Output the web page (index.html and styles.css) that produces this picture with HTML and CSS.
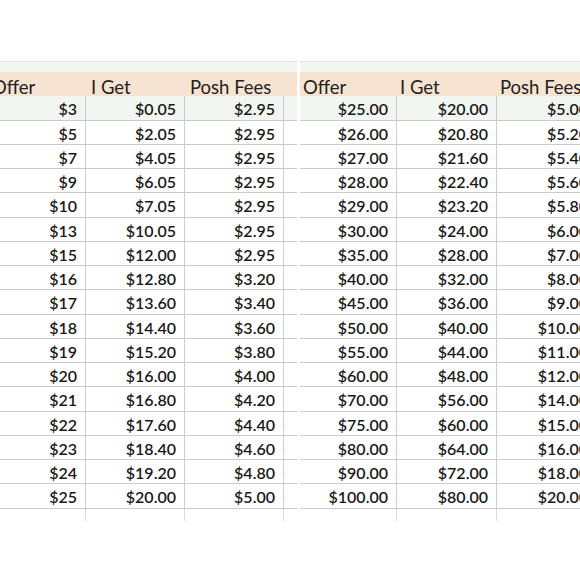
FILE: index.html
```html
<!DOCTYPE html>
<html>
<head>
<meta charset="utf-8">
<link rel="stylesheet" href="styles.css">
</head>
<body>
<div class="sheets">
  <div class="sheet sheet-left">
    <div class="strip"></div>
    <div class="grid">
      <div class="h">Offer</div><div class="h">I Get</div><div class="h">Posh Fees</div><div class="h"></div>
      <div class="c first">$3</div><div class="c first">$0.05</div><div class="c first">$2.95</div><div class="c first e"></div>
      <div class="c">$5</div><div class="c">$2.05</div><div class="c">$2.95</div><div class="c e"></div>
      <div class="c">$7</div><div class="c">$4.05</div><div class="c">$2.95</div><div class="c e"></div>
      <div class="c">$9</div><div class="c">$6.05</div><div class="c">$2.95</div><div class="c e"></div>
      <div class="c">$10</div><div class="c">$7.05</div><div class="c">$2.95</div><div class="c e"></div>
      <div class="c">$13</div><div class="c">$10.05</div><div class="c">$2.95</div><div class="c e"></div>
      <div class="c">$15</div><div class="c">$12.00</div><div class="c">$2.95</div><div class="c e"></div>
      <div class="c">$16</div><div class="c">$12.80</div><div class="c">$3.20</div><div class="c e"></div>
      <div class="c">$17</div><div class="c">$13.60</div><div class="c">$3.40</div><div class="c e"></div>
      <div class="c">$18</div><div class="c">$14.40</div><div class="c">$3.60</div><div class="c e"></div>
      <div class="c">$19</div><div class="c">$15.20</div><div class="c">$3.80</div><div class="c e"></div>
      <div class="c">$20</div><div class="c">$16.00</div><div class="c">$4.00</div><div class="c e"></div>
      <div class="c">$21</div><div class="c">$16.80</div><div class="c">$4.20</div><div class="c e"></div>
      <div class="c">$22</div><div class="c">$17.60</div><div class="c">$4.40</div><div class="c e"></div>
      <div class="c">$23</div><div class="c">$18.40</div><div class="c">$4.60</div><div class="c e"></div>
      <div class="c">$24</div><div class="c">$19.20</div><div class="c">$4.80</div><div class="c e"></div>
      <div class="c">$25</div><div class="c">$20.00</div><div class="c">$5.00</div><div class="c e"></div>
      <div class="t"></div><div class="t"></div><div class="t"></div><div class="t e"></div>
    </div>
  </div>
  <div class="sheet sheet-right">
    <div class="strip"></div>
    <div class="grid">
      <div class="h">Offer</div><div class="h">I Get</div><div class="h">Posh Fees</div><div class="h"></div>
      <div class="c first">$25.00</div><div class="c first">$20.00</div><div class="c first">$5.00</div><div class="c first"></div>
      <div class="c">$26.00</div><div class="c">$20.80</div><div class="c">$5.20</div><div class="c"></div>
      <div class="c">$27.00</div><div class="c">$21.60</div><div class="c">$5.40</div><div class="c"></div>
      <div class="c">$28.00</div><div class="c">$22.40</div><div class="c">$5.60</div><div class="c"></div>
      <div class="c">$29.00</div><div class="c">$23.20</div><div class="c">$5.80</div><div class="c"></div>
      <div class="c">$30.00</div><div class="c">$24.00</div><div class="c">$6.00</div><div class="c"></div>
      <div class="c">$35.00</div><div class="c">$28.00</div><div class="c">$7.00</div><div class="c"></div>
      <div class="c">$40.00</div><div class="c">$32.00</div><div class="c">$8.00</div><div class="c"></div>
      <div class="c">$45.00</div><div class="c">$36.00</div><div class="c">$9.00</div><div class="c"></div>
      <div class="c">$50.00</div><div class="c">$40.00</div><div class="c">$10.00</div><div class="c"></div>
      <div class="c">$55.00</div><div class="c">$44.00</div><div class="c">$11.00</div><div class="c"></div>
      <div class="c">$60.00</div><div class="c">$48.00</div><div class="c">$12.00</div><div class="c"></div>
      <div class="c">$70.00</div><div class="c">$56.00</div><div class="c">$14.00</div><div class="c"></div>
      <div class="c">$75.00</div><div class="c">$60.00</div><div class="c">$15.00</div><div class="c"></div>
      <div class="c">$80.00</div><div class="c">$64.00</div><div class="c">$16.00</div><div class="c"></div>
      <div class="c">$90.00</div><div class="c">$72.00</div><div class="c">$18.00</div><div class="c"></div>
      <div class="c">$100.00</div><div class="c">$80.00</div><div class="c">$20.00</div><div class="c"></div>
      <div class="t"></div><div class="t"></div><div class="t"></div><div class="t"></div>
    </div>
  </div>
</div>
</body>
</html>
```

FILE: styles.css
```css
html, body {
  margin: 0;
  padding: 0;
  background: #ffffff;
  width: 580px;
  height: 580px;
  overflow: hidden;
}

.sheets {
  display: flex;
  gap: 3px;
  padding-top: 61px;
  margin-left: -13px;
  font-family: Lato, "Liberation Sans", sans-serif;
  font-size: 16px;
  color: #1a1a1a;
}

.sheet {
  border-top: 1px solid #e2e2e2;
  flex: none;
}

.sheet-left { width: 310px; }
.sheet-right { width: 400px; }

.strip {
  height: 10px;
  background: #f3f7f1;
}

.grid {
  display: grid;
  grid-auto-rows: 24.25px;
}

.sheet-left .grid { grid-template-columns: 99px 99px 99px 13px; }
.sheet-right .grid { grid-template-columns: 97px 100px 100px 103px; }

.grid .h {
  height: 29px;
  box-sizing: border-box;
  background: #f6e3d1;
  border-bottom: 1px solid #dcd3ca;
  padding-left: 5px;
  font-size: 18.5px;
  line-height: 30px;
  white-space: nowrap;
  overflow: hidden;
  color: #222;
}

.sheet-right .grid .h { padding-left: 3px; }

.grid .c {
  box-sizing: border-box;
  border-right: 1px solid #cdcdcd;
  border-bottom: 1px solid #cbcbcb;
  text-align: right;
  padding-right: 8px;
  line-height: 25px;
  font-weight: 600;
  white-space: nowrap;
}

.grid .c.first { background: #f2f6f0; }
.grid .c.e { border-right: none; }

.grid .t {
  height: 12px;
  box-sizing: border-box;
  border-right: 1px solid #dcdcdc;
}
.grid .t.e { border-right: none; }
```
